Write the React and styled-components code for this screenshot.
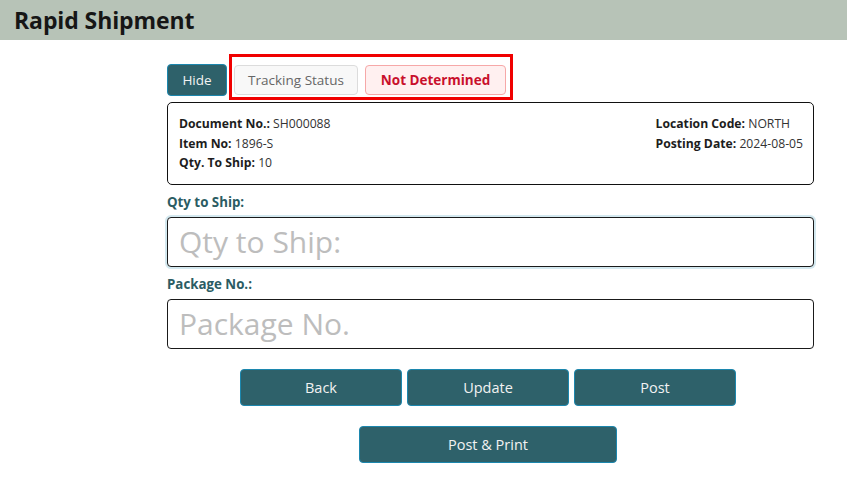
import styled, { createGlobalStyle } from "styled-components";

const GlobalStyle = createGlobalStyle`
  body {
    margin: 0;
    background: #fff;
    font-family: "Open Sans", "Noto Sans", sans-serif;
  }
  * {
    box-sizing: border-box;
  }
`;

function App() {
  return (
    <>
      <GlobalStyle />
      <Header>
        <Title>Rapid Shipment</Title>
      </Header>
      <Main>
        <TopRow>
          <HideButton>Hide</HideButton>
          <StatusFrame>
            <StatusChip>Tracking Status</StatusChip>
            <StatusChip $alert>Not Determined</StatusChip>
          </StatusFrame>
        </TopRow>
        <InfoCard>
          <InfoColumn>
            <InfoLine>
              <b>Document No.:</b> SH000088
            </InfoLine>
            <InfoLine>
              <b>Item No:</b> 1896-S
            </InfoLine>
            <InfoLine>
              <b>Qty. To Ship:</b> 10
            </InfoLine>
          </InfoColumn>
          <InfoColumn>
            <InfoLine>
              <b>Location Code:</b> NORTH
            </InfoLine>
            <InfoLine>
              <b>Posting Date:</b> 2024-08-05
            </InfoLine>
          </InfoColumn>
        </InfoCard>
        <FieldLabel>Qty to Ship:</FieldLabel>
        <TextInput $focused placeholder="Qty to Ship:" />
        <FieldLabel>Package No.:</FieldLabel>
        <TextInput placeholder="Package No." />
        <ButtonRow>
          <ActionButton>Back</ActionButton>
          <ActionButton>Update</ActionButton>
          <ActionButton>Post</ActionButton>
        </ButtonRow>
        <ButtonRow>
          <ActionButton $wide>Post &amp; Print</ActionButton>
        </ButtonRow>
      </Main>
    </>
  );
}
export default App;

const Header = styled.header`
  height: 40px;
  background: #b7c3b7;
  display: flex;
  align-items: center;
  padding-left: 14px;
`;

const Title = styled.h1`
  margin: 0;
  font-size: 23px;
  font-weight: 700;
  color: #161616;
  letter-spacing: -0.1px;
`;

const Main = styled.main`
  width: 647px;
  margin-left: 167px;
  padding-top: 14px;
`;

const TopRow = styled.div`
  display: flex;
  align-items: flex-start;
  gap: 2px;
`;

const HideButton = styled.button`
  margin-top: 10px;
  width: 60px;
  height: 32px;
  background: #2e616a;
  border: 1px solid #1c87ae;
  border-radius: 4px;
  color: #f2f2f2;
  font-family: inherit;
  font-size: 13.5px;
  padding: 0;
`;

const StatusFrame = styled.div`
  display: flex;
  gap: 7px;
  border: 3px solid #f00000;
  padding: 8px 4px 2px 2px;
`;

const StatusChip = styled.div`
  height: 30px;
  display: flex;
  align-items: center;
  justify-content: center;
  width: ${(p) => (p.$alert ? "141px" : "124px")};
  border-radius: 4px;
  font-size: 13.5px;
  font-weight: ${(p) => (p.$alert ? 700 : 400)};
  color: ${(p) => (p.$alert ? "#c9102c" : "#666")};
  background: ${(p) => (p.$alert ? "#fff0f0" : "#f8f8f8")};
  border: 1px solid ${(p) => (p.$alert ? "#f6a8a8" : "#dcdcdc")};
`;

const InfoCard = styled.div`
  margin-top: 2px;
  border: 1px solid #111;
  border-radius: 5px;
  padding: 11px 10px 11px 11px;
  display: flex;
  justify-content: space-between;
`;

const InfoColumn = styled.div`
  display: flex;
  flex-direction: column;
`;

const InfoLine = styled.div`
  font-size: 12.2px;
  line-height: 19.5px;
  color: #333;

  b {
    color: #1d1d1d;
    font-weight: 700;
  }
`;

const FieldLabel = styled.div`
  margin: 8px 0 6px;
  font-size: 13.3px;
  line-height: 18px;
  font-weight: 700;
  color: #2b5c63;
`;

const TextInput = styled.input`
  display: block;
  width: 100%;
  height: 50px;
  border: 1px solid #1a1a1a;
  border-radius: 4px;
  padding: 0 11px;
  font-family: inherit;
  font-size: 30px;
  color: #333;
  outline: none;
  box-shadow: ${(p) => (p.$focused ? "0 0 0 2px #d3e8ef" : "none")};

  &::placeholder {
    color: #bdbdbd;
  }
`;

const ButtonRow = styled.div`
  display: flex;
  justify-content: center;
  gap: 5px;
  margin-top: 20px;
  padding-right: 5px;
`;

const ActionButton = styled.button`
  width: ${(p) => (p.$wide ? "258px" : "162px")};
  height: 37px;
  background: #2e616a;
  border: 1px solid #1c87ae;
  border-radius: 4px;
  color: #f2f2f2;
  font-family: inherit;
  font-size: 14.5px;
  padding: 0;
`;
